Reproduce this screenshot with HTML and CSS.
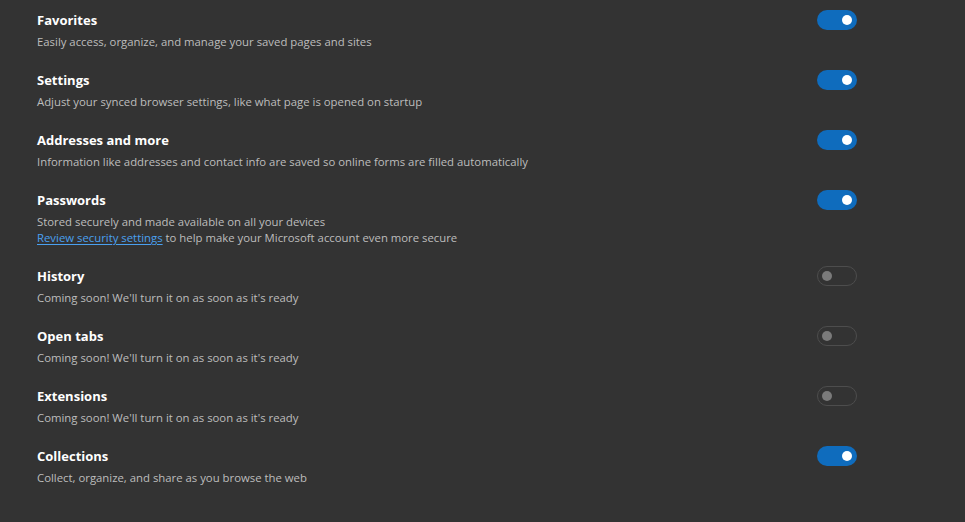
FILE: index.html
```html
<!DOCTYPE html>
<html>
<head>
<meta charset="utf-8">
<link rel="stylesheet" href="styles.css">
</head>
<body>
<div class="list">
  <div class="row">
    <div class="text">
      <div class="title">Favorites</div>
      <div class="desc">Easily access, organize, and manage your saved pages and sites</div>
    </div>
    <span class="toggle on"><span class="knob"></span></span>
  </div>
  <div class="row">
    <div class="text">
      <div class="title">Settings</div>
      <div class="desc">Adjust your synced browser settings, like what page is opened on startup</div>
    </div>
    <span class="toggle on"><span class="knob"></span></span>
  </div>
  <div class="row">
    <div class="text">
      <div class="title">Addresses and more</div>
      <div class="desc">Information like addresses and contact info are saved so online forms are filled automatically</div>
    </div>
    <span class="toggle on"><span class="knob"></span></span>
  </div>
  <div class="row">
    <div class="text">
      <div class="title">Passwords</div>
      <div class="desc">Stored securely and made available on all your devices</div>
      <div class="desc"><a class="link" href="#">Review security settings</a> to help make your Microsoft account even more secure</div>
    </div>
    <span class="toggle on"><span class="knob"></span></span>
  </div>
  <div class="row">
    <div class="text">
      <div class="title">History</div>
      <div class="desc">Coming soon! We'll turn it on as soon as it's ready</div>
    </div>
    <span class="toggle off"><span class="knob"></span></span>
  </div>
  <div class="row">
    <div class="text">
      <div class="title">Open tabs</div>
      <div class="desc">Coming soon! We'll turn it on as soon as it's ready</div>
    </div>
    <span class="toggle off"><span class="knob"></span></span>
  </div>
  <div class="row">
    <div class="text">
      <div class="title">Extensions</div>
      <div class="desc">Coming soon! We'll turn it on as soon as it's ready</div>
    </div>
    <span class="toggle off"><span class="knob"></span></span>
  </div>
  <div class="row">
    <div class="text">
      <div class="title">Collections</div>
      <div class="desc">Collect, organize, and share as you browse the web</div>
    </div>
    <span class="toggle on"><span class="knob"></span></span>
  </div>
</div>
</body>
</html>
```

FILE: styles.css
```css
html, body {
  margin: 0;
  padding: 0;
  background: #333333;
  height: 100%;
}
body {
  font-family: "Open Sans", "Noto Sans", sans-serif;
  -webkit-font-smoothing: antialiased;
}
.list {
  width: 820px;
  padding-left: 37px;
  display: flex;
  flex-direction: column;
}
.row {
  display: flex;
  justify-content: space-between;
  align-items: flex-start;
  padding: 10px 0;
}
.text {
  display: flex;
  flex-direction: column;
}
.title {
  color: #ffffff;
  font-size: 13px;
  font-weight: 700;
  line-height: 20px;
  margin-bottom: 4px;
}
.desc {
  color: #bdbdbd;
  font-size: 11.35px;
  line-height: 16px;
}
.link {
  color: #4aa0f0;
  text-decoration: underline;
  text-underline-offset: 2px;
}
.toggle {
  box-sizing: border-box;
  width: 40px;
  height: 20px;
  border-radius: 10px;
  display: flex;
  align-items: center;
  padding: 0 5px;
}
.toggle.on {
  background: #0f6cbd;
  justify-content: flex-end;
}
.toggle.off {
  border: 1px solid #4d4d4d;
  padding: 0 4px;
  justify-content: flex-start;
}
.knob {
  width: 10px;
  height: 10px;
  border-radius: 50%;
}
.toggle.on .knob { background: #ffffff; }
.toggle.off .knob { background: #7a7a7a; }
```
